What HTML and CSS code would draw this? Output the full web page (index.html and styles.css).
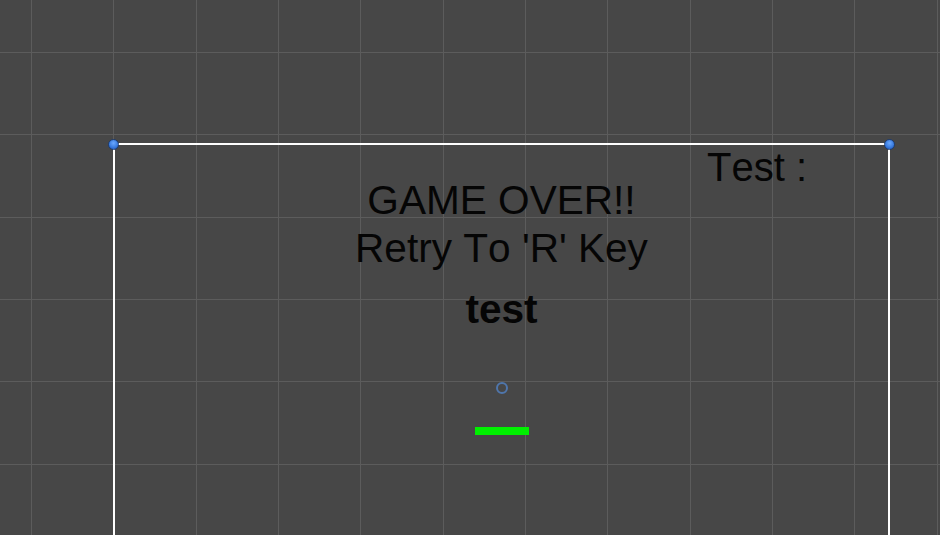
FILE: index.html
```html
<!DOCTYPE html>
<html>
<head>
<meta charset="utf-8">
<link rel="stylesheet" href="styles.css">
</head>
<body>
<div class="scene">
  <div class="canvas-frame">
    <span class="handle handle-left"></span>
    <span class="handle handle-right"></span>
    <div class="score">Test :</div>
    <div class="center">
      <div class="message">GAME OVER!!<br>Retry To 'R' Key</div>
      <div class="label">test</div>
      <div class="ball"></div>
      <div class="paddle"></div>
    </div>
  </div>
</div>
</body>
</html>
```
FILE: styles.css
```css
html, body {
  margin: 0;
  padding: 0;
}
body {
  width: 940px;
  height: 535px;
  overflow: hidden;
  background-color: #474747;
  font-family: "Liberation Sans", Arial, sans-serif;
  font-kerning: none;
}
.scene {
  width: 940px;
  height: 535px;
  overflow: hidden;
  padding-top: 143px;
  box-sizing: border-box;
  background-image:
    repeating-linear-gradient(to right, transparent 0, transparent 31px, #5c5c5c 31px, #5c5c5c 32px, transparent 32px, transparent 82.33px),
    repeating-linear-gradient(to bottom, transparent 0, transparent 52px, #5c5c5c 52px, #5c5c5c 53px, transparent 53px, transparent 82.33px);
}
.canvas-frame {
  position: relative;
  margin-left: 113px;
  width: 773px;
  height: 420px;
  border: 2px solid #ffffff;
  border-bottom: none;
}
.handle {
  position: absolute;
  top: -6px;
  width: 9px;
  height: 9px;
  border-radius: 50%;
  border: 1px solid #1d3d72;
  background: radial-gradient(circle at 50% 35%, #6aa8ff 0, #3b7de0 55%, #2256b8 100%);
}
.handle-left {
  left: -7px;
}
.handle-right {
  right: -7px;
}
.score {
  position: absolute;
  left: 592px;
  top: -2px;
  font-size: 40px;
  line-height: 48px;
  color: #050505;
  white-space: nowrap;
}
.center {
  display: flex;
  flex-direction: column;
  align-items: center;
  padding-top: 31px;
}
.message {
  font-size: 40.6px;
  line-height: 48px;
  color: #050505;
  text-align: center;
  white-space: nowrap;
}
.label {
  margin-top: 13px;
  font-size: 40.6px;
  line-height: 48px;
  font-weight: bold;
  color: #050505;
}
.ball {
  margin-top: 49px;
  width: 8px;
  height: 8px;
  border-radius: 50%;
  border: 2px solid #4f76ac;
}
.paddle {
  margin-top: 33px;
  width: 54px;
  height: 8px;
  background: #00f000;
}
```
